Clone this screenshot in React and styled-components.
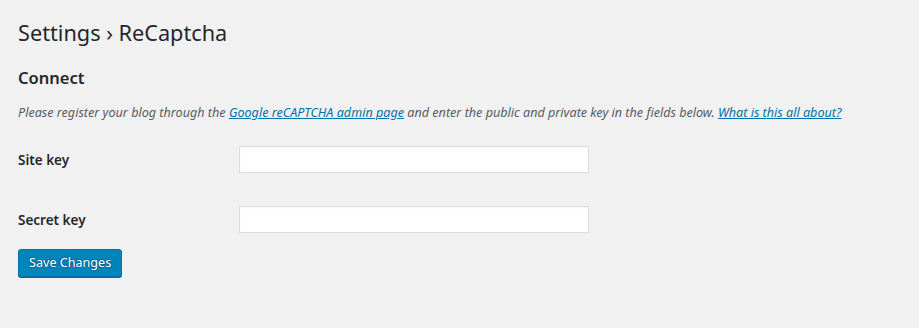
import styled, { createGlobalStyle } from "styled-components";

const GlobalStyle = createGlobalStyle`
  html, body {
    margin: 0;
    padding: 0;
    background: #f1f1f1;
  }
  body {
    font-family: "Noto Sans", "Open Sans", sans-serif;
    color: #23282d;
    font-size: 13px;
  }
`;

const App = () => {
  return (
    <>
      <GlobalStyle />
      <Wrap>
        <Title>Settings › ReCaptcha</Title>
        <SectionTitle>Connect</SectionTitle>
        <Description>
          Please register your blog through the{" "}
          <a href="#">Google reCAPTCHA admin page</a> and enter the public and
          private key in the fields below. <a href="#">What is this all about?</a>
        </Description>
        <FormTable>
          <FieldRow>
            <Label htmlFor="site-key">Site key</Label>
            <TextInput id="site-key" type="text" />
          </FieldRow>
          <FieldRow>
            <Label htmlFor="secret-key">Secret key</Label>
            <TextInput id="secret-key" type="text" />
          </FieldRow>
        </FormTable>
        <PrimaryButton type="button">Save Changes</PrimaryButton>
      </Wrap>
    </>
  );
};

export default App;

const Wrap = styled.div`
  padding: 0 18px;
  width: 919px;
  height: 328px;
  box-sizing: border-box;
  overflow: hidden;
`;

const Title = styled.h1`
  margin: 0;
  padding: 18px 0 0;
  font-size: 21.7px;
  font-weight: 400;
  line-height: 30px;
  color: #23282d;
`;

const SectionTitle = styled.h2`
  margin: 18px 0 0;
  font-size: 16.5px;
  font-weight: 600;
  line-height: 24px;
  color: #23282d;
`;

const Description = styled.p`
  margin: 13px 0 0;
  font-size: 12.6px;
  font-style: italic;
  line-height: 20px;
  color: #555d66;

  a {
    color: #0073aa;
    text-decoration: underline;
  }
`;

const FormTable = styled.div`
  display: flex;
  flex-direction: column;
  gap: 33px;
  margin-top: 23px;
`;

const FieldRow = styled.div`
  display: flex;
  align-items: center;
`;

const Label = styled.label`
  width: 221px;
  font-size: 13.5px;
  font-weight: 600;
  color: #23282d;
`;

const TextInput = styled.input`
  width: 350px;
  height: 27px;
  box-sizing: border-box;
  margin: 0;
  border: 1px solid #ddd;
  background: #fff;
  box-shadow: inset 0 1px 2px rgba(0, 0, 0, 0.04);
  outline: none;
`;

const PrimaryButton = styled.button`
  display: block;
  margin-top: 16px;
  height: 28px;
  padding: 0 10px 1px;
  font-family: "Noto Sans", "Open Sans", sans-serif;
  font-size: 12.6px;
  line-height: 26px;
  color: #fff;
  background: #0085ba;
  border: 1px solid #0073aa;
  border-radius: 3px;
  box-shadow: 0 1px 0 #006799;
  text-shadow: 0 -1px 1px #006799, 1px 0 1px #006799, 0 1px 1px #006799,
    -1px 0 1px #006799;
  cursor: pointer;
`;
